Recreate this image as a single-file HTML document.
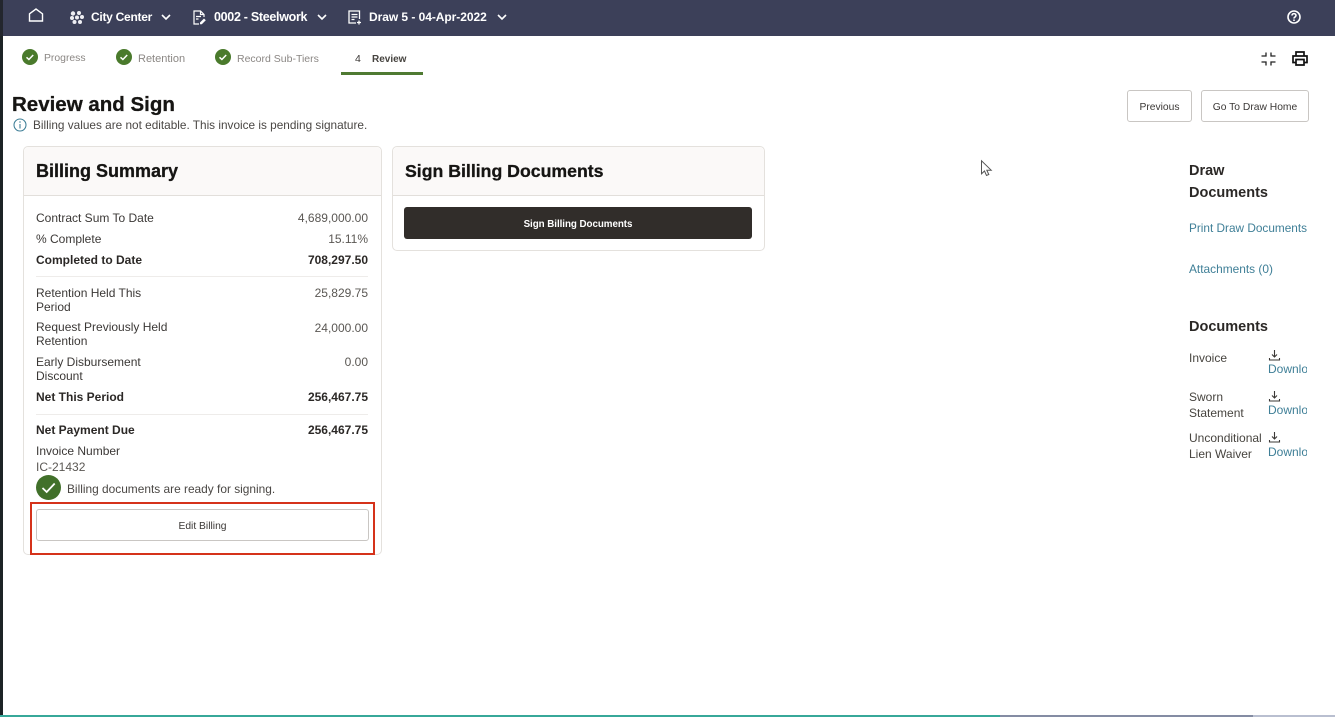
<!DOCTYPE html>
<html lang="en"><head><meta charset="utf-8"><title>Review and Sign</title>
<style>
html,body{margin:0;padding:0;background:#fff}
html{width:1335px;height:717px;overflow:hidden}
body{width:1335px;height:717px;overflow:hidden;position:relative;font-family:"Liberation Sans",sans-serif;color:#3b3836;filter:blur(.25px)}
.t{position:absolute;white-space:nowrap;font-size:12px;line-height:14px}
.r{text-align:right;right:967px}
.b{font-weight:700;color:#2b2826}
.n{color:#fff;font-size:12px;font-weight:700;top:10px;line-height:15px}
.g{color:#8b8784;font-size:11px;top:52px}
.h{font-size:18px;font-weight:700;color:#161513;line-height:22px;-webkit-text-stroke:.3px #161513}
.l{color:#3f7f97;font-size:11.8px}
.s{font-size:12px;line-height:16px;color:#47443f}
.box{position:absolute;box-sizing:border-box}
svg{position:absolute;overflow:visible}
.card{position:absolute;box-sizing:border-box;border:1px solid #e4e1dd;border-radius:5px;background:#fff}
.head{position:absolute;left:0;right:0;top:0;height:48px;background:#fbf9f8;border-bottom:1px solid #e2dfdb;border-radius:5px 5px 0 0}
.btn{position:absolute;box-sizing:border-box;border:1px solid #c9c6c3;border-radius:3px;background:#fff;text-align:center;font-size:10.3px;color:#3b3836}
.sep{position:absolute;left:36px;width:332px;height:1px;background:#eeecea}
</style></head><body>
<div class="box" style="left:0;top:0;width:3px;height:717px;background:#1d2326"></div>
<div class="box" style="left:0;top:0;width:1335px;height:36px;background:#3c4059"></div>
<div class="box" style="left:0;top:0;width:3px;height:36px;background:#23262e"></div>

<svg style="left:28px;top:8px" width="16" height="15" viewBox="0 0 16 15" fill="none" stroke="#fff" stroke-width="1.4"><path d="M1.500 5.800 8 1l6.500 4.800V13H1.500z"/></svg>
<svg style="left:70px;top:11px" width="14" height="13" viewBox="0 0 14 13" fill="#eeeef3"><circle cx="3" cy="2.500" r="2.200"/><circle cx="9" cy="2" r="2"/><circle cx="12" cy="6" r="2"/><circle cx="2" cy="7" r="2"/><circle cx="7" cy="6.500" r="2"/><circle cx="4.500" cy="11" r="2"/><circle cx="10" cy="11" r="2"/></svg>
<div class="t n" style="left:91px;letter-spacing:-.27px">City Center</div>
<svg style="left:161px;top:14px" width="10" height="7" viewBox="0 0 10 7" fill="none" stroke="#fff" stroke-width="1.600"><path d="M1 1l4 4 4-4"/></svg>
<svg style="left:193px;top:10px" width="14" height="15" viewBox="0 0 14 15" fill="none" stroke="#fff" stroke-width="1.200"><path d="M6 14H1V1h6.500L11 4.500V7M7.500 1v3.500H11M3 6.500h5M3 9h2.500"/><path d="M7 12.500l4-4 1.800 1.800-4 4H7z" fill="#fff" stroke="none"/></svg>
<div class="t n" style="left:214px;font-size:12.5px;letter-spacing:-.3px">0002 - Steelwork</div>
<svg style="left:317px;top:14px" width="10" height="7" viewBox="0 0 10 7" fill="none" stroke="#fff" stroke-width="1.600"><path d="M1 1l4 4 4-4"/></svg>
<svg style="left:348px;top:10px" width="14" height="15" viewBox="0 0 14 15" fill="none" stroke="#fff" stroke-width="1.300"><path d="M8 13H1V1h10.500v8M3.500 4.500h6M3.500 7h6M3.500 9.500h3M11 10.500v4M9 12.500h4"/></svg>
<div class="t n" style="left:369px;letter-spacing:-.05px">Draw 5 - 04-Apr-2022</div>
<svg style="left:497px;top:14px" width="10" height="7" viewBox="0 0 10 7" fill="none" stroke="#fff" stroke-width="1.600"><path d="M1 1l4 4 4-4"/></svg>
<svg style="left:1287px;top:10px" width="14" height="14" viewBox="0 0 14 14" fill="none" stroke="#fff" stroke-width="1.600"><circle cx="7" cy="7" r="6"/><path d="M5 5.500C5 3 9 3 9 5.500 9 7 7 7 7 8.500M7 9.500v1.500"/></svg>

<svg style="left:22px;top:49px" width="16" height="16" viewBox="0 0 16 16"><circle cx="8" cy="8" r="8" fill="#4a7a2c"/><path d="M4.500 8.300l2.400 2.200 4.300-4.500" fill="none" stroke="#fff" stroke-width="1.500"/></svg>
<div class="t g" style="left:44px;font-size:10.400px">Progress</div>
<svg style="left:116px;top:49px" width="16" height="16" viewBox="0 0 16 16"><circle cx="8" cy="8" r="8" fill="#4a7a2c"/><path d="M4.500 8.300l2.400 2.200 4.300-4.500" fill="none" stroke="#fff" stroke-width="1.500"/></svg>
<div class="t g" style="left:138px">Retention</div>
<svg style="left:215px;top:49px" width="16" height="16" viewBox="0 0 16 16"><circle cx="8" cy="8" r="8" fill="#4a7a2c"/><path d="M4.500 8.300l2.400 2.200 4.300-4.500" fill="none" stroke="#fff" stroke-width="1.500"/></svg>
<div class="t g" style="left:237px;font-size:10.500px">Record Sub-Tiers</div>
<div class="t" style="left:355px;top:52px;font-size:10.500px;color:#3b3836">4</div>
<div class="t" style="left:372px;top:53px;font-size:10px;font-weight:700;color:#46433f">Review</div>
<div class="box" style="left:341px;top:72px;width:82px;height:3px;background:#4f7a32"></div>

<svg style="left:1261px;top:52px" width="15" height="14" viewBox="0 0 15 14" fill="none" stroke="#222" stroke-width="1.300"><path d="M.5 4h4.500V.5M10 .5V4h4.500M.5 10h4.500v3.500M10 13.500V10h4.500"/></svg>
<svg style="left:1292px;top:51px" width="16" height="15" viewBox="0 0 16 15" fill="none" stroke="#111" stroke-width="1.700"><path d="M4 5V1h8v4M4 11.500H1V5h14v6.500h-3M4 8.500h8V14H4z"/></svg>

<div class="t" style="left:12px;top:92px;font-size:20.500px;line-height:25px;font-weight:700;color:#161513;-webkit-text-stroke:.3px #161513">Review and Sign</div>
<svg style="left:13px;top:118px" width="14" height="14" viewBox="0 0 14 14" fill="none" stroke="#3f7f97" stroke-width="1.100"><circle cx="7" cy="7" r="6"/><path d="M7 6v4.500M7 3.300v1.400"/></svg>
<div class="t" style="left:33px;top:118px;font-size:11.800px;color:#4a4744">Billing values are not editable. This invoice is pending signature.</div>

<div class="btn" style="left:1127px;top:90px;width:65px;height:32px;line-height:33px">Previous</div>
<div class="btn" style="left:1201px;top:90px;width:108px;height:32px;line-height:33px">Go To Draw Home</div>

<div class="card" style="left:23px;top:146px;width:359px;height:409px"><div class="head"></div></div>
<div class="t h" style="left:36px;top:160px">Billing Summary</div>

<div class="t" style="left:36px;top:211px;font-size:12px">Contract Sum To Date</div><div class="t r" style="top:211px;font-size:12px;color:#5a5753">4,689,000.00</div>
<div class="t" style="left:36px;top:232px;font-size:12px">% Complete</div><div class="t r" style="top:232px;font-size:12px;color:#5a5753">15.11%</div>
<div class="t b" style="left:36px;top:253px;font-size:12px">Completed to Date</div><div class="t b r" style="top:253px;font-size:12px">708,297.50</div>
<div class="sep" style="top:276px"></div>
<div class="t" style="left:36px;top:286px;font-size:12px">Retention Held This</div><div class="t" style="left:36px;top:300px;font-size:12px">Period</div><div class="t r" style="top:286px;font-size:12px;color:#5a5753">25,829.75</div>
<div class="t" style="left:36px;top:320px;font-size:12px">Request Previously Held</div><div class="t" style="left:36px;top:334px;font-size:12px">Retention</div><div class="t r" style="top:321px;font-size:12px;color:#5a5753">24,000.00</div>
<div class="t" style="left:36px;top:355px;font-size:12px">Early Disbursement</div><div class="t" style="left:36px;top:369px;font-size:12px">Discount</div><div class="t r" style="top:355px;font-size:12px;color:#5a5753">0.00</div>
<div class="t b" style="left:36px;top:390px;font-size:12px">Net This Period</div><div class="t b r" style="top:390px;font-size:12px">256,467.75</div>
<div class="sep" style="top:414px"></div>
<div class="t b" style="left:36px;top:423px;font-size:12px">Net Payment Due</div><div class="t b r" style="top:423px;font-size:12px">256,467.75</div>
<div class="t" style="left:36px;top:444px;font-size:12px">Invoice Number</div>
<div class="t" style="left:36px;top:460px;font-size:12px;color:#5a5753">IC-21432</div>
<svg style="left:36px;top:475px" width="25" height="25" viewBox="0 0 25 25"><circle cx="12.500" cy="12.500" r="12.500" fill="#41702a"/><path d="M6.500 13l4.200 4 8-8.500" fill="none" stroke="#fff" stroke-width="1.800"/></svg>
<div class="t" style="left:67px;top:482px;font-size:11.900px;color:#4a4744">Billing documents are ready for signing.</div>
<div class="btn" style="left:36px;top:509px;width:333px;height:32px;line-height:33px">Edit Billing</div>
<div class="box" style="left:30px;top:502px;width:345px;height:53px;border:2px solid #d5321a"></div>

<div class="card" style="left:392px;top:146px;width:373px;height:105px"><div class="head"></div></div>
<div class="t h" style="left:405px;top:160px;font-size:17.700px">Sign Billing Documents</div>
<div class="box" style="left:404px;top:207px;width:348px;height:32px;background:#312d2a;border-radius:3px;color:#fff;font-size:9.800px;font-weight:700;text-align:center;line-height:35px;letter-spacing:-.05px">Sign Billing Documents</div>

<svg style="left:981px;top:160px" width="11" height="17" viewBox="0 0 11 17" fill="#fff" stroke="#555" stroke-width="1"><path d="M.5.800v13l3-2.800 2 4.500 2.300-1-2-4.300h4.400z"/></svg>

<div class="t" style="left:1189px;top:160px;font-size:14.500px;line-height:22px;font-weight:700;color:#2b2826">Draw<br>Documents</div>
<div class="t l" style="left:1189px;top:221px">Print Draw Documents</div>
<div class="t l" style="left:1189px;top:262px;font-size:11.900px">Attachments (0)</div>
<div class="t" style="left:1189px;top:317px;font-size:14.500px;line-height:20px;font-weight:700;color:#2b2826">Documents</div>

<div class="t s" style="left:1189px;top:350px">Invoice</div>
<div class="t s" style="left:1189px;top:389px">Sworn<br>Statement</div>
<div class="t s" style="left:1189px;top:430px">Unconditional<br>Lien Waiver</div>

<svg style="left:1269px;top:350px" width="11" height="11" viewBox="0 0 11 11" fill="none" stroke="#3b3836" stroke-width="1.100"><path d="M5.500 0v6.500M3 4.500l2.500 2.500L8 4.500M.5 8v2h10V8"/></svg>
<svg style="left:1269px;top:391px" width="11" height="11" viewBox="0 0 11 11" fill="none" stroke="#3b3836" stroke-width="1.100"><path d="M5.500 0v6.500M3 4.500l2.500 2.500L8 4.500M.5 8v2h10V8"/></svg>
<svg style="left:1269px;top:432px" width="11" height="11" viewBox="0 0 11 11" fill="none" stroke="#3b3836" stroke-width="1.100"><path d="M5.500 0v6.500M3 4.500l2.500 2.500L8 4.500M.5 8v2h10V8"/></svg>
<div class="box l" style="left:1268px;top:362px;width:39px;height:14px;overflow:hidden;line-height:14px;font-size:12px">Download</div>
<div class="box l" style="left:1268px;top:403px;width:39px;height:14px;overflow:hidden;line-height:14px;font-size:12px">Download</div>
<div class="box l" style="left:1268px;top:445px;width:39px;height:14px;overflow:hidden;line-height:14px;font-size:12px">Download</div>

<div class="box" style="left:0;top:714.500px;width:1000px;height:2.500px;background:#37a899"></div>
<div class="box" style="left:1000px;top:714.500px;width:253px;height:2.500px;background:#848ca3"></div>
<div class="box" style="left:1253px;top:714.500px;width:82px;height:2.500px;background:#b9bfd0"></div>
</body></html>
